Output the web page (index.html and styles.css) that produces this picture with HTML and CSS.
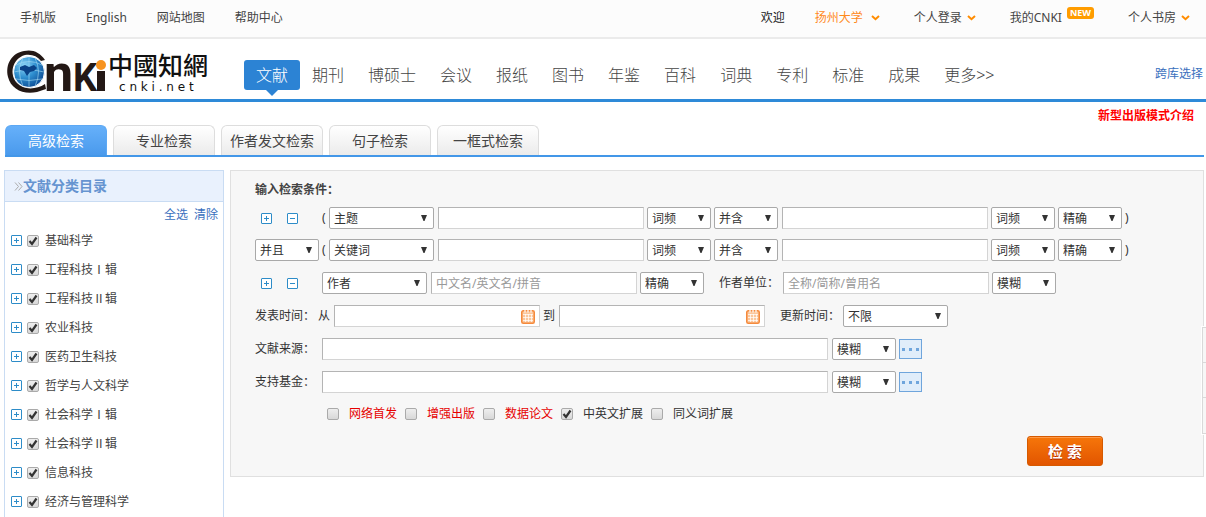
FILE: index.html
```html
<!doctype html>
<html lang="zh-CN">
<head>
  <meta charset="utf-8">
  <meta name="viewport" content="width=device-width,initial-scale=1">
  <title>高级检索 - 中国知网</title>
  <link rel="stylesheet" href="styles.css">
</head>
<body>
  <!-- Top bar -->
  <div class="topbar">
    <div class="top-left">
      <a href="#">手机版</a>
      <a href="#">English</a>
      <a href="#">网站地图</a>
      <a href="#">帮助中心</a>
    </div>
    <div class="top-right">
      <span class="welcome">欢迎</span>
      <a href="#" class="school">扬州大学 <svg class="chev" width="9" height="6" viewBox="0 0 9 6"><path d="M1 1l3.500 3.200L8 1"/></svg></a>
      <a href="#">个人登录 <svg class="chev" width="9" height="6" viewBox="0 0 9 6"><path d="M1 1l3.500 3.200L8 1"/></svg></a>
      <a href="#" class="mycnki">我的CNKI <span class="new">NEW</span></a>
      <a href="#">个人书房 <svg class="chev" width="9" height="6" viewBox="0 0 9 6"><path d="M1 1l3.500 3.200L8 1"/></svg></a>
    </div>
  </div>

  <!-- Header -->
  <header class="header">
    <a href="#" class="logo" aria-label="中國知網">
      <svg width="210" height="50" viewBox="0 0 210 50">
        <defs>
          <radialGradient id="globe" cx="35%" cy="30%" r="75%">
            <stop offset="0" stop-color="#8fd6f7"/>
            <stop offset="0.5" stop-color="#2f8fd0"/>
            <stop offset="1" stop-color="#0b4a94"/>
          </radialGradient>
        </defs>
        <path d="M45 12C40 4 32 1 24 3 12 5 5 16 8 29c3 12 15 18 29 15l9-3-1-5c-9 6-22 6-28-1C9 26 12 11 25 7c7-1 12 1 16 6z" fill="#231815"/>
        <circle cx="29" cy="24" r="15.500" fill="url(#globe)" stroke="#fff"/>
        <path d="M16 17q13-7 26 0M14 24q15-4 30 0M16 31q13 3 26 0M29 9v30M23 10q-7 14 0 28M35 10q7 14 0 28" fill="none" stroke="#a6dcf5" stroke-width=".6"/>
        <path d="M20 19l5-2 4 2 5-2 3 3-3 3-4 1-3 4-3-5-4-1z" fill="#0a4288"/>
        <text class="logo-n" x="44" y="43">n</text>
        <text class="logo-k" x="73" y="43">K</text>
        <path d="M97 23h8v20h-8z" fill="#231815"/>
        <circle cx="101" cy="17" r="5" fill="#f7931e"/>
        <text class="logo-name" x="108" y="27">中國知網</text>
        <text class="logo-url" x="119" y="43">c n k i . n e t</text>
      </svg>
    </a>
    <nav class="nav">
      <a href="#" class="active">文献</a>
      <a href="#">期刊</a>
      <a href="#">博硕士</a>
      <a href="#">会议</a>
      <a href="#">报纸</a>
      <a href="#">图书</a>
      <a href="#">年鉴</a>
      <a href="#">百科</a>
      <a href="#">词典</a>
      <a href="#">专利</a>
      <a href="#">标准</a>
      <a href="#">成果</a>
      <a href="#">更多&gt;&gt;</a>
    </nav>
    <a href="#" class="cross">跨库选择</a>
  </header>

  <div class="notice"><a href="#">新型出版模式介绍</a></div>

  <!-- Search tabs -->
  <div class="tabs">
    <button type="button" class="tab current">高级检索</button>
    <button type="button" class="tab">专业检索</button>
    <button type="button" class="tab">作者发文检索</button>
    <button type="button" class="tab">句子检索</button>
    <button type="button" class="tab">一框式检索</button>
  </div>

  <main class="main">
    <!-- Category tree -->
    <aside class="sidebar">
      <h2><svg width="9" height="9" viewBox="0 0 9 9"><path d="M1 .5l3.500 4L1 8.500M4.500 .5l3.500 4-3.500 4"/></svg>文献分类目录</h2>
      <div class="pick"><a href="#">全选</a><a href="#">清除</a></div>
      <ul class="tree">
        <li><button type="button" class="sq plus" aria-label="展开"></button><label><input type="checkbox" checked>基础科学</label></li>
        <li><button type="button" class="sq plus" aria-label="展开"></button><label><input type="checkbox" checked>工程科技Ⅰ辑</label></li>
        <li><button type="button" class="sq plus" aria-label="展开"></button><label><input type="checkbox" checked>工程科技Ⅱ辑</label></li>
        <li><button type="button" class="sq plus" aria-label="展开"></button><label><input type="checkbox" checked>农业科技</label></li>
        <li><button type="button" class="sq plus" aria-label="展开"></button><label><input type="checkbox" checked>医药卫生科技</label></li>
        <li><button type="button" class="sq plus" aria-label="展开"></button><label><input type="checkbox" checked>哲学与人文科学</label></li>
        <li><button type="button" class="sq plus" aria-label="展开"></button><label><input type="checkbox" checked>社会科学Ⅰ辑</label></li>
        <li><button type="button" class="sq plus" aria-label="展开"></button><label><input type="checkbox" checked>社会科学Ⅱ辑</label></li>
        <li><button type="button" class="sq plus" aria-label="展开"></button><label><input type="checkbox" checked>信息科技</label></li>
        <li><button type="button" class="sq plus" aria-label="展开"></button><label><input type="checkbox" checked>经济与管理科学</label></li>
      </ul>
    </aside>

    <!-- Search form -->
    <form class="panel">
      <h3>输入检索条件：</h3>

      <div class="row">
        <div class="lead icons">
          <button type="button" class="sq plus" aria-label="增加"></button>
          <button type="button" class="sq" aria-label="减少"></button>
        </div>
        <span class="paren">(</span>
        <select class="wide" aria-label="检索项"><option>主题</option></select>
        <input type="text" aria-label="检索词">
        <select aria-label="词频"><option>词频</option></select>
        <select aria-label="关系"><option>并含</option></select>
        <input type="text" aria-label="第二检索词">
        <select aria-label="第二词频"><option>词频</option></select>
        <select aria-label="匹配"><option>精确</option></select>
        <span class="paren">)</span>
      </div>

      <div class="row">
        <div class="lead">
          <select aria-label="逻辑"><option>并且</option></select>
        </div>
        <span class="paren">(</span>
        <select class="wide" aria-label="检索项"><option>关键词</option></select>
        <input type="text" aria-label="检索词">
        <select aria-label="词频"><option>词频</option></select>
        <select aria-label="关系"><option>并含</option></select>
        <input type="text" aria-label="第二检索词">
        <select aria-label="第二词频"><option>词频</option></select>
        <select aria-label="匹配"><option>精确</option></select>
        <span class="paren">)</span>
      </div>

      <div class="row">
        <div class="lead icons">
          <button type="button" class="sq plus" aria-label="增加"></button>
          <button type="button" class="sq" aria-label="减少"></button>
        </div>
        <select class="wide" aria-label="责任者"><option>作者</option></select>
        <input type="text" placeholder="中文名/英文名/拼音" aria-label="作者姓名">
        <select aria-label="匹配"><option>精确</option></select>
        <label class="second" for="unit">作者单位：</label>
        <input type="text" id="unit" placeholder="全称/简称/曾用名">
        <select aria-label="单位匹配"><option>模糊</option></select>
      </div>

      <div class="row">
        <span class="caption">发表时间：</span>
        <label for="from">从</label>
        <input type="text" id="from" class="date">
        <label for="to">到</label>
        <input type="text" id="to" class="date">
        <label class="second" for="update">更新时间：</label>
        <select class="wide" id="update"><option>不限</option></select>
      </div>

      <div class="row">
        <label class="lead" for="source">文献来源：</label>
        <input type="text" id="source" class="long">
        <select aria-label="来源匹配"><option>模糊</option></select>
        <button type="button" class="more" aria-label="选择来源"></button>
      </div>

      <div class="row">
        <label class="lead" for="fund">支持基金：</label>
        <input type="text" id="fund" class="long">
        <select aria-label="基金匹配"><option>模糊</option></select>
        <button type="button" class="more" aria-label="选择基金"></button>
      </div>

      <div class="checks">
        <label class="red"><input type="checkbox">网络首发</label>
        <label class="red"><input type="checkbox">增强出版</label>
        <label class="red"><input type="checkbox">数据论文</label>
        <label><input type="checkbox" checked>中英文扩展</label>
        <label><input type="checkbox">同义词扩展</label>
      </div>

      <div class="submit">
        <button type="submit" class="search">检 索</button>
      </div>
    </form>
  </main>

  <!-- Floating tool strip, tucked against the right edge -->
  <div class="strip"><span></span><span></span><span></span></div>
</body>
</html>
```

FILE: styles.css
```css
:root {
  --blue: #2e8ad8;
  --link: #3a6fbd;
  --orange: #ff8c00;
  --line: #ddd;
  font-family: "Noto Sans", "Noto Sans CJK SC", sans-serif;
}
* { box-sizing: border-box; }
body { margin: 0; background: #fff; color: #444; font-size: 12px; line-height: 18px; }
a { color: inherit; text-decoration: none; }
button, input, select { font: inherit; color: #333; margin: 0; }

/* Top bar */
.topbar {
  display: flex; justify-content: space-between;
  padding: 9px 16px 10px 20px;
  background: #fcfcfc; border-bottom: 2px solid #ebebeb;
}
.top-left { display: flex; gap: 30px; }
.top-right { display: flex; gap: 34px; }
.top-right a { display: flex; align-items: center; gap: 5px; }
.top-right .school { color: #ff8a1c; gap: 8px; margin-left: -4px; }
.welcome { color: #222; }
.chev path { fill: none; stroke: var(--orange); stroke-width: 2; }
.new {
  align-self: flex-start;
  padding: 0 3px; border-radius: 3px;
  background: #ff9c00; color: #fff;
  font: bold 9px/12px "Open Sans", sans-serif;
}
.top-right .mycnki { margin-top: -2px; align-items: flex-end; }

/* Header */
.header {
  display: flex; align-items: center;
  height: 63px; padding-right: 3px;
  border-bottom: 3px solid var(--blue);
}
.logo { width: 244px; height: 50px; margin-top: 8px; }
.logo svg { overflow: visible; }
.logo-n, .logo-k { font-family: Roboto, sans-serif; font-weight: bold; fill: #231815; }
.logo-n { font-size: 52px; }
.logo-k { font-size: 38px; }
.logo-name { font: 500 25px "Noto Sans CJK TC", sans-serif; fill: #111; }
.logo-url { font: 12px "DejaVu Sans", sans-serif; fill: #111; }
.nav { display: flex; flex: 1; padding-top: 20px; padding-bottom: 8px; }
.nav a { padding: 0 12px; font-size: 16px; font-weight: 300; line-height: 30px; color: #444; }
.nav .active { position: relative; background: #2c83d4; color: #fff; border-radius: 3px; }
.nav .active::after {
  content: ""; position: absolute; top: 30px; left: 22px;
  border: 6px solid transparent; border-top-color: #2c83d4; border-bottom: 0;
}
.cross { color: var(--link); padding-top: 10px; }
.notice { padding: 5px 12px 0; text-align: right; font-weight: bold; color: #f00; }

/* Search tabs */
.tabs { display: flex; gap: 6px; margin: 0 2px 0 5px; border-bottom: 2px solid #4397e8; }
.tab {
  width: 102px; height: 30px; padding: 0;
  border: 1px solid var(--line); border-bottom: 0; border-radius: 6px 6px 0 0;
  background: linear-gradient(#fff, #ebebeb);
  font-size: 14px; color: #444;
}
.tab.current { background: linear-gradient(#66b0fa, #4a9aec); border-color: #5ca8f4; color: #fff; }

.main { display: flex; gap: 6px; padding: 13px 2px 0 4px; }

/* Category tree */
.sidebar { width: 220px; border: 1px solid #c9dcf3; border-bottom: 0; }
.sidebar h2 {
  display: flex; align-items: center; margin: 0; padding-left: 9px;
  background: #e9f1fd; border-bottom: 1px solid #c9dcf3;
  font-size: 14px; line-height: 30px; color: #6694d0;
}
.sidebar h2 path { fill: none; stroke: #aaa; }
.pick { display: flex; justify-content: flex-end; gap: 6px; padding: 4px 5px 2px; color: var(--link); }
.tree { list-style: none; margin: 0; padding: 0 6px 1px; }
.tree li { display: flex; align-items: center; gap: 5px; height: 29px; }
.tree label { display: flex; align-items: center; gap: 6px; }

.sq {
  width: 11px; height: 11px; padding: 0;
  border: 1px solid #2d8cc8; border-radius: 1px;
  background: linear-gradient(#2d8cc8, #2d8cc8) center / 5px 1px no-repeat, #fff;
}
.sq.plus {
  background: linear-gradient(#2d8cc8, #2d8cc8) center / 5px 1px no-repeat,
              linear-gradient(#2d8cc8, #2d8cc8) center / 1px 5px no-repeat, #fff;
}
input[type="checkbox"] {
  appearance: none; width: 12px; height: 12px;
  border: 1px solid #aaa; border-radius: 2px;
  background: linear-gradient(#eee, #d8d8d8);
}
input[type="checkbox"]:checked {
  background: url("data:image/svg+xml,%3Csvg xmlns='http://www.w3.org/2000/svg' viewBox='0 0 10 10'%3E%3Cpath d='M1.500 5l2.500 3L8.500 1.500' fill='none' stroke='%23333' stroke-width='2.200'/%3E%3C/svg%3E") center / 10px 10px no-repeat,
              linear-gradient(#eee, #d8d8d8);
}

/* Search form */
.panel {
  flex: 1; align-self: flex-start; padding: 10px 0 10px 24px;
  background: #f7f7f7; border: 1px solid #e0e0e0; color: #333;
}
.panel h3 { margin: 0 0 8px; font-size: 12px; color: #444; }
.row { display: flex; align-items: center; gap: 3px; height: 22px; margin-bottom: 11px; }
h3 + .row { margin-bottom: 10px; }
.lead { width: 64px; flex: none; }
.icons { display: flex; gap: 15px; padding-left: 6px; }
.paren { width: 4px; line-height: 20px; }
.caption { width: 60px; white-space: nowrap; }
.second { margin-left: 12px; width: 60px; white-space: nowrap; }
.row select {
  appearance: none; width: 64px; height: 22px; padding: 2px 4px 0;
  border: 1px solid #a9a9a9; border-radius: 2px;
  background: url("data:image/svg+xml,%3Csvg xmlns='http://www.w3.org/2000/svg' viewBox='0 0 6 6'%3E%3Cpath d='M0 0h6L3.500 6h-1z' fill='%23333'/%3E%3C/svg%3E") right 6px top 7px / 6px 6px no-repeat #fff;
}
.row .wide { width: 105px; }
.row input {
  width: 206px; height: 22px; padding: 0 4px; margin-left: 1px;
  border: 1px solid #d4d4d4; border-top-color: #b4b4b4; border-left-color: #b4b4b4;
  background: #fff;
}
.row .long { width: 506px; margin-left: 0; }
.long + select { margin-left: 1px; }
.row input::placeholder { color: #999; opacity: 1; }
.row .date {
  padding-right: 22px;
  background: url("data:image/svg+xml,%3Csvg xmlns='http://www.w3.org/2000/svg' viewBox='0 0 14 15'%3E%3Crect x='.75' y='1.750' width='12.500' height='12.500' rx='1.500' fill='%23fbc79c' stroke='%23f58a3c' stroke-width='1.500'/%3E%3Cpath d='M2 5.500h10M2 8.500h10M2 11.500h10M4.500 5v8M7.500 5v8M10.500 5v8' stroke='%23fff' stroke-width='.7'/%3E%3Cpath d='M4 1v2.500M7 1v2.500M10 1v2.500' stroke='%23fff' stroke-width='1.200'/%3E%3C/svg%3E") right 4px center / 14px 15px no-repeat #fff;
}
.more {
  width: 23px; height: 20px; padding: 0 2px; border: 1px solid #6fa5dc;
  background: linear-gradient(90deg, #6fa5dc 3px, transparent 3px) 0 center / 7px 3px repeat-x content-box, #e0edfa;
}
.checks { display: flex; gap: 8px; padding: 1px 0 0 72px; }
.checks label { display: flex; align-items: center; gap: 10px; }
.checks .red { color: #e60000; }
.submit { display: flex; justify-content: flex-end; padding: 13px 100px 0 0; }
.search {
  width: 76px; height: 30px; padding: 0;
  border: 1px solid #d65a00; border-radius: 3px;
  background: linear-gradient(#f6760a, #e25500); box-shadow: inset 0 1px #ff9a48;
  font-size: 15px; font-weight: bold; color: #fff; text-shadow: 0 1px #a81c00;
}

/* Floating tool strip */
.strip { position: fixed; top: 327px; right: 0; width: 4px; border: 1px solid #d9d9d9; border-right: 0; box-shadow: 0 0 0 1px #fff; }
.strip span { display: block; height: 35px; background: #f7f7f7; border-bottom: 1px solid #d9d9d9; }
.strip span:last-child { border-bottom: 0; }
```
